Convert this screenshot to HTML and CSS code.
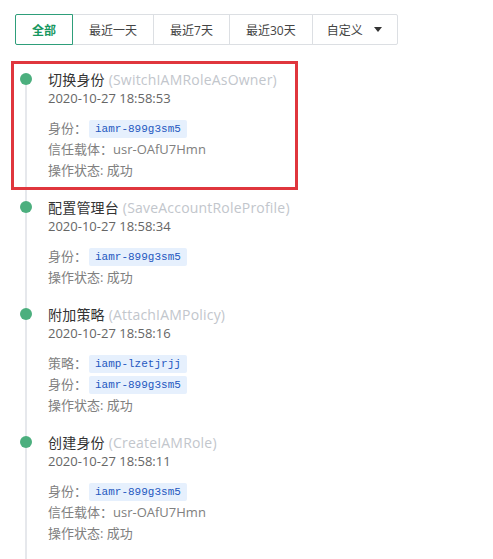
FILE: index.html
```html
<!DOCTYPE html>
<html lang="zh-CN">
<head>
<meta charset="utf-8">
<title>操作记录</title>
<link rel="stylesheet" href="styles.css">
</head>
<body>
<div class="page">
  <div class="tabs">
    <button class="tab active">全部</button>
    <button class="tab">最近一天</button>
    <button class="tab">最近7天</button>
    <button class="tab">最近30天</button>
    <button class="tab tab-select">自定义<span class="caret"></span></button>
  </div>

  <div class="timeline">
    <div class="highlight"></div>

    <div class="item">
      <span class="dot"></span>
      <div class="title">切换身份 <span class="api">(SwitchIAMRoleAsOwner)</span></div>
      <div class="date">2020-10-27 18:58:53</div>
      <div class="details">
        <div class="row">身份：<span class="tag">iamr-899g3sm5</span></div>
        <div class="row">信任载体：usr-OAfU7Hmn</div>
        <div class="row">操作状态: 成功</div>
      </div>
    </div>

    <div class="item">
      <span class="dot"></span>
      <div class="title">配置管理台 <span class="api">(SaveAccountRoleProfile)</span></div>
      <div class="date">2020-10-27 18:58:34</div>
      <div class="details">
        <div class="row">身份：<span class="tag">iamr-899g3sm5</span></div>
        <div class="row">操作状态: 成功</div>
      </div>
    </div>

    <div class="item">
      <span class="dot"></span>
      <div class="title">附加策略 <span class="api">(AttachIAMPolicy)</span></div>
      <div class="date">2020-10-27 18:58:16</div>
      <div class="details">
        <div class="row">策略：<span class="tag">iamp-lzetjrjj</span></div>
        <div class="row">身份：<span class="tag">iamr-899g3sm5</span></div>
        <div class="row">操作状态: 成功</div>
      </div>
    </div>

    <div class="item">
      <span class="dot"></span>
      <div class="title">创建身份 <span class="api">(CreateIAMRole)</span></div>
      <div class="date">2020-10-27 18:58:11</div>
      <div class="details">
        <div class="row">身份：<span class="tag">iamr-899g3sm5</span></div>
        <div class="row">信任载体：usr-OAfU7Hmn</div>
        <div class="row">操作状态: 成功</div>
      </div>
    </div>
  </div>
</div>
</body>
</html>
```

FILE: styles.css
```css
html, body {
  margin: 0;
  padding: 0;
  background: #ffffff;
}

body {
  font-family: "Open Sans", "Noto Sans CJK SC", sans-serif;
  color: #333333;
  overflow: hidden;
}

.page {
  padding: 14px 0 0 0;
}

.tabs {
  display: flex;
  margin-left: 15px;
}

.tab {
  flex-shrink: 0;
  white-space: nowrap;
  height: 31px;
  padding: 0 16px;
  margin: 0 0 0 -1px;
  border: 1px solid #dcdfe3;
  background: #ffffff;
  font-family: "Open Sans", "Noto Sans CJK SC", sans-serif;
  font-size: 12px;
  color: #444444;
  display: flex;
  align-items: center;
  cursor: pointer;
}

.tab:first-child {
  margin-left: 0;
  border-radius: 2px 0 0 2px;
}

.tab:last-child {
  border-radius: 0 2px 2px 0;
}

.tab.active {
  position: relative;
  z-index: 1;
  border-color: #2e9e7a;
  color: #17975f;
  font-weight: 600;
}

.tab-select {
  padding: 0 15px 0 14px;
}

.caret {
  margin-left: 11px;
  width: 0;
  height: 0;
  border-left: 4px solid transparent;
  border-right: 4px solid transparent;
  border-top: 5px solid #333333;
}

.timeline {
  position: relative;
  margin-top: 25px;
}

.highlight {
  position: absolute;
  left: 11px;
  top: -9px;
  width: 287px;
  height: 129px;
  box-sizing: border-box;
  border: 3px solid #e0363d;
  pointer-events: none;
  z-index: 2;
}

.item {
  position: relative;
  padding: 0 0 17px 48px;
}

.item::before {
  content: "";
  position: absolute;
  left: 25px;
  top: 0;
  bottom: 0;
  width: 2px;
  background: #e6e8ec;
}

.highlight + .item::before {
  top: 9px;
}

.dot {
  position: absolute;
  left: 20px;
  top: 3px;
  width: 12px;
  height: 12px;
  border-radius: 50%;
  background: #4caf7e;
  z-index: 1;
}

.title {
  font-size: 14px;
  line-height: 19px;
  color: #333333;
  letter-spacing: 0.2px;
}

.api {
  color: #c2c6cc;
}

.date {
  font-size: 13px;
  line-height: 18px;
  color: #666666;
}

.details {
  margin-top: 11px;
}

.row {
  font-size: 13px;
  line-height: 21px;
  height: 21px;
  color: #808080;
  display: flex;
  align-items: center;
}

.tag {
  display: inline-block;
  margin-left: 2px;
  padding: 0 6px;
  height: 18px;
  line-height: 18px;
  font-family: "Liberation Mono", "DejaVu Sans Mono", monospace;
  font-size: 11px;
  color: #1f58c0;
  background: #e6f0fd;
  border-radius: 2px;
}
```
